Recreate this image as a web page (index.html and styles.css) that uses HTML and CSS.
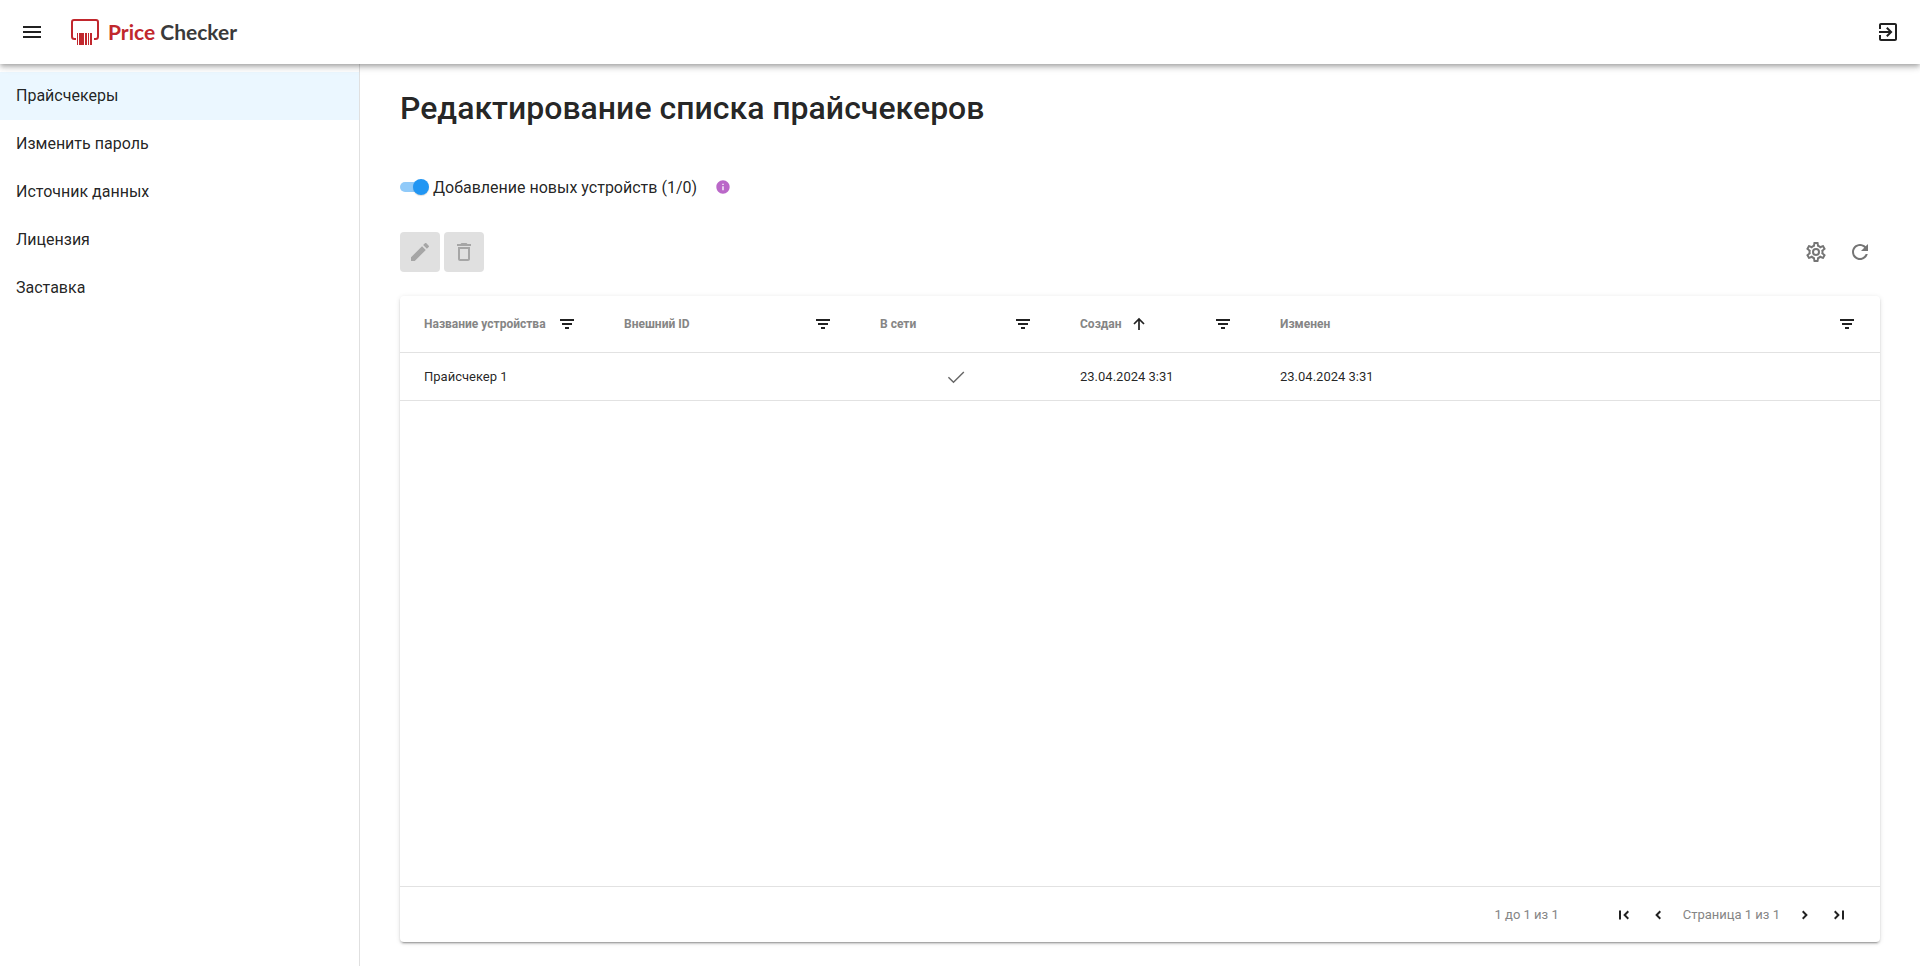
FILE: index.html
```
<!DOCTYPE html>
<html lang="ru">
<head>
  <meta charset="UTF-8" />
  <meta name="viewport" content="width=device-width, initial-scale=1" />
  <title>Price Checker</title>
  <link rel="stylesheet" href="styles.css">
</head>
<body>
  <!-- Shared icons -->
  <svg class="sprite" aria-hidden="true">
    <symbol id="filter" viewBox="0 0 18 18">
      <path d="M2 4h14v2H2zM4 8h10v2H4zM7 12h4v2H7z"/>
    </symbol>
    <symbol id="chevron" viewBox="0 0 18 18">
      <path d="M10.600 4.600 12 6 9 9l3 3-1.400 1.400L6.200 9z"/>
    </symbol>
    <symbol id="first" viewBox="0 0 18 18">
      <path d="M4 4.500h2v9H4zM12.600 4.600 14 6l-3 3 3 3-1.400 1.400L8.200 9z"/>
    </symbol>
  </svg>

  <header class="toolbar">
    <button class="icon-btn" aria-label="Меню">
      <svg width="24" height="24" viewBox="0 0 24 24"><path d="M3 18h18v-2H3v2zm0-5h18v-2H3v2zm0-7v2h18V6H3z"/></svg>
    </button>
    <a class="logo" href="#">
      <svg width="30" height="28" viewBox="0 0 30 28">
        <path d="M6 21H4.500Q2 21 2 18.500V4Q2 2 4 2h22q2 0 2 2v14.500q0 2.500-2.500 2.500H24" fill="none" stroke="currentColor" stroke-width="2"/>
        <path d="M7 15h1v12H7zM9 15h5v12H9zM15 15h2v12h-2zM18 15h1v12h-1zM20 15h2v12h-2z" fill="currentColor"/>
      </svg>
      <span class="logo-text"><span class="logo-red">Price</span> Checker</span>
    </a>
    <button class="icon-btn logout" aria-label="Выйти">
      <svg width="24" height="24" viewBox="0 0 24 24"><path d="M10.090 15.590 11.500 17l5-5-5-5-1.410 1.410L12.670 11H3v2h9.670l-2.580 2.590zM19 3H5c-1.110 0-2 .9-2 2v4h2V5h14v14H5v-4H3v4c0 1.100.89 2 2 2h14c1.100 0 2-.9 2-2V5c0-1.100-.9-2-2-2z"/></svg>
    </button>
  </header>

  <div class="layout">
    <nav class="sidebar">
      <a class="nav-item active" href="#">Прайсчекеры</a>
      <a class="nav-item" href="#">Изменить пароль</a>
      <a class="nav-item" href="#">Источник данных</a>
      <a class="nav-item" href="#">Лицензия</a>
      <a class="nav-item" href="#">Заставка</a>
    </nav>

    <main class="content">
      <h1>Редактирование списка прайсчекеров</h1>

      <div class="toggle-row">
        <input class="toggle" type="checkbox" id="addDevices" checked>
        <label for="addDevices">Добавление новых устройств (1/0)</label>
        <svg class="info" width="16" height="16" viewBox="0 0 24 24"><path d="M12 2C6.480 2 2 6.480 2 12s4.480 10 10 10 10-4.480 10-10S17.520 2 12 2zm1 15h-2v-6h2v6zm0-8h-2V7h2v2z"/></svg>
      </div>

      <div class="actions">
        <button class="action-btn" disabled aria-label="Редактировать">
          <svg width="24" height="24" viewBox="0 0 24 24"><path d="M3 17.250V21h3.750L17.810 9.940l-3.750-3.750L3 17.250zM20.710 7.040c.39-.39.39-1.020 0-1.410l-2.340-2.340c-.39-.39-1.020-.39-1.410 0l-1.830 1.830 3.750 3.750 1.830-1.830z"/></svg>
        </button>
        <button class="action-btn" disabled aria-label="Удалить">
          <svg width="24" height="24" viewBox="0 0 24 24"><path d="M6 19c0 1.100.9 2 2 2h8c1.100 0 2-.9 2-2V7H6v12zM8 9h8v10H8V9zm7.500-5-1-1h-5l-1 1H5v2h14V4h-3.500z"/></svg>
        </button>
        <span class="spacer"></span>
        <button class="icon-btn grey" aria-label="Настройки">
          <svg width="24" height="24" viewBox="0 0 24 24"><path d="M12 8a4 4 0 0 1 4 4 4 4 0 0 1-4 4 4 4 0 0 1-4-4 4 4 0 0 1 4-4m0 2a2 2 0 0 0-2 2 2 2 0 0 0 2 2 2 2 0 0 0 2-2 2 2 0 0 0-2-2m-2 12c-.25 0-.46-.18-.5-.42l-.37-2.650c-.63-.25-1.170-.59-1.690-.99l-2.490 1.010c-.22.080-.49 0-.61-.22l-2-3.460c-.13-.22-.07-.49.12-.64l2.110-1.660L4.500 12l.07-1-2.110-1.630c-.19-.15-.25-.42-.12-.64l2-3.460c.12-.22.39-.31.61-.22l2.490 1c.52-.39 1.060-.73 1.690-.98l.37-2.650c.04-.24.25-.42.5-.42h4c.25 0 .46.180.5.420l.37 2.650c.63.250 1.170.590 1.690.980l2.490-1c.22-.09.490 0 .610.220l2 3.460c.13.220.070.490-.12.640L19.430 11l.07 1-.07 1 2.110 1.630c.19.150.250.420.120.640l-2 3.460c-.12.220-.39.310-.61.220l-2.490-1c-.52.390-1.060.730-1.690.980l-.37 2.650c-.04.240-.25.420-.5.420h-4m1.250-18-.37 2.610c-1.200.250-2.260.890-3.030 1.780L5.440 7.350l-.75 1.300L6.800 10.200a6.480 6.480 0 0 0 0 3.600l-2.120 1.560.75 1.300 2.430-1.040c.77.880 1.820 1.520 3.010 1.760l.37 2.620h1.520l.37-2.610c1.190-.25 2.240-.89 3.010-1.770l2.430 1.040.75-1.300-2.120-1.550c.4-1.170.4-2.440 0-3.610l2.110-1.550-.75-1.300-2.410 1.040a5.420 5.420 0 0 0-3.030-1.770L12.750 4h-1.500z"/></svg>
        </button>
        <button class="icon-btn grey" aria-label="Обновить">
          <svg width="24" height="24" viewBox="0 0 24 24"><path d="M17.650 6.350C16.200 4.900 14.210 4 12 4c-4.420 0-7.990 3.580-7.990 8s3.570 8 7.990 8c3.730 0 6.840-2.550 7.730-6h-2.080c-.82 2.330-3.040 4-5.650 4-3.310 0-6-2.690-6-6s2.690-6 6-6c1.660 0 3.140.69 4.220 1.780L13 11h7V4l-2.350 2.350z"/></svg>
        </button>
      </div>

      <section class="grid">
        <div class="grid-body">
          <table>
            <colgroup>
              <col class="col"><col class="col-wide"><col class="col"><col class="col"><col>
            </colgroup>
            <thead>
              <tr>
                <th><div class="head">Название устройства <svg class="filter"><use href="#filter"/></svg></div></th>
                <th><div class="head">Внешний ID <svg class="filter"><use href="#filter"/></svg></div></th>
                <th><div class="head">В сети <svg class="filter"><use href="#filter"/></svg></div></th>
                <th><div class="head">Создан
                  <svg class="sort" viewBox="0 0 18 18"><path d="M9 15V4M4 9l5-5 5 5" fill="none" stroke="currentColor" stroke-width="1.700"/></svg>
                  <svg class="filter"><use href="#filter"/></svg></div></th>
                <th><div class="head">Изменен <svg class="filter"><use href="#filter"/></svg></div></th>
              </tr>
            </thead>
            <tbody>
              <tr>
                <td>Прайсчекер 1</td>
                <td></td>
                <td><svg class="check" width="24" height="24" viewBox="0 0 24 24"><path d="M9 17.200 3.500 11.700l-1.200 1.200L9 19.600 22 6.600l-1.200-1.200z"/></svg></td>
                <td>23.04.2024 3:31</td>
                <td>23.04.2024 3:31</td>
              </tr>
            </tbody>
          </table>
        </div>
        <div class="paging">
          <span class="summary">1 до 1 из 1</span>
          <div class="pages">
            <button class="page-btn" aria-label="Первая"><svg><use href="#first"/></svg></button>
            <button class="page-btn" aria-label="Назад"><svg><use href="#chevron"/></svg></button>
            <span>Страница 1 из 1</span>
            <button class="page-btn flip" aria-label="Вперед"><svg><use href="#chevron"/></svg></button>
            <button class="page-btn flip" aria-label="Последняя"><svg><use href="#first"/></svg></button>
          </div>
        </div>
      </section>
    </main>
  </div>
</body>
</html>
```
FILE: styles.css
```
* {
  box-sizing: border-box;
}
body {
  margin: 0;
  height: 100vh;
  display: flex;
  flex-direction: column;
  background: #fff;
  font-family: Roboto, sans-serif;
  font-size: 16px;
  color: rgba(0,0,0,0.87);
}
svg {
  display: block;
  flex: none;
  fill: currentColor;
}
.sprite {
  display: none;
}
button {
  padding: 0;
  border: none;
  background: none;
  color: inherit;
  cursor: pointer;
  display: flex;
  align-items: center;
  justify-content: center;
}
a {
  color: inherit;
  text-decoration: none;
}

/* Toolbar */
.toolbar {
  position: relative;
  z-index: 2;
  flex: none;
  height: 64px;
  padding: 0 12px;
  display: flex;
  align-items: center;
  background: #fff;
  box-shadow: 0 2px 4px -1px rgba(0,0,0,0.2), 0 4px 5px rgba(0,0,0,0.14), 0 1px 10px rgba(0,0,0,0.12);
}
.icon-btn {
  width: 40px;
  height: 40px;
}
.grey {
  color: #757575;
}
.logo {
  display: flex;
  align-items: center;
  gap: 8px;
  margin-left: 18px;
  color: #c1272d;
}
.logo-text {
  font-family: Lato, sans-serif;
  font-size: 21px;
  font-weight: bold;
  line-height: 28px;
  color: #3a3a3a;
}
.logo-red {
  color: #c1272d;
}
.logout {
  margin-left: auto;
}

/* Layout */
.layout {
  flex: 1;
  display: flex;
  min-height: 0;
}
.sidebar {
  flex: none;
  width: 360px;
  padding-top: 8px;
  border-right: 1px solid #e0e0e0;
}
.nav-item {
  display: flex;
  align-items: center;
  height: 48px;
  padding: 0 16px 2px;
}
.nav-item.active {
  background: #ebf7ff;
}
.content {
  flex: 1;
  min-width: 0;
  padding: 24px 40px;
  display: flex;
  flex-direction: column;
}
h1 {
  margin: 0 0 48px;
  font-size: 32px;
  font-weight: 500;
  line-height: 40px;
}

/* Toggle */
.toggle-row {
  display: flex;
  align-items: center;
  height: 22px;
  margin-bottom: 34px;
}
.toggle {
  appearance: none;
  position: relative;
  width: 28px;
  height: 10px;
  margin: 0 5px 0 0;
  border-radius: 5px;
  background: #90caf9;
  cursor: pointer;
}
.toggle::after {
  content: "";
  position: absolute;
  top: -3px;
  right: -1px;
  width: 16px;
  height: 16px;
  border-radius: 50%;
  background: #2196f3;
  box-shadow: 0 1px 1px rgba(0,0,0,0.14);
}
.info {
  margin-left: 18px;
  color: #ba68c8;
}

/* Actions */
.actions {
  display: flex;
  gap: 4px;
  margin-bottom: 24px;
}
.action-btn {
  width: 40px;
  height: 40px;
  border-radius: 4px;
  background: #e0e0e0;
  color: #a6a6a6;
}
.spacer {
  flex: 1;
}

/* Grid */
.grid {
  flex: 1;
  display: flex;
  flex-direction: column;
  border-radius: 4px;
  font-size: 13px;
  box-shadow: 0 3px 1px -2px rgba(0,0,0,0.2), 0 2px 2px rgba(0,0,0,0.14), 0 1px 5px rgba(0,0,0,0.12);
}
.grid-body {
  flex: 1;
}
table {
  width: 100%;
  table-layout: fixed;
  border-collapse: separate;
  border-spacing: 0;
}
.col {
  width: 200px;
}
.col-wide {
  width: 256px;
}
th, td {
  padding: 0 24px;
  border-bottom: 1px solid #e2e2e2;
  text-align: left;
}
th {
  height: 57px;
  font-size: 12px;
  font-weight: 700;
  color: #858585;
}
td {
  height: 48px;
}
.head {
  display: flex;
  align-items: center;
  white-space: nowrap;
}
.filter, .sort {
  width: 18px;
  height: 18px;
  color: rgba(0,0,0,0.87);
}
.filter {
  margin-left: auto;
}
.sort {
  margin-left: 8px;
}
.check {
  width: 20px;
  height: 20px;
  margin: 0 auto;
  color: #666;
}
.paging {
  display: flex;
  align-items: center;
  justify-content: flex-end;
  gap: 56px;
  height: 56px;
  padding: 0 32px;
  border-top: 1px solid #e2e2e2;
  color: #858585;
}
.pages {
  display: flex;
  align-items: center;
  gap: 16px;
}
.page-btn {
  width: 18px;
  height: 18px;
  color: rgba(0,0,0,0.87);
}
.page-btn svg {
  width: 18px;
  height: 18px;
}
.flip svg {
  transform: scaleX(-1);
}
```
